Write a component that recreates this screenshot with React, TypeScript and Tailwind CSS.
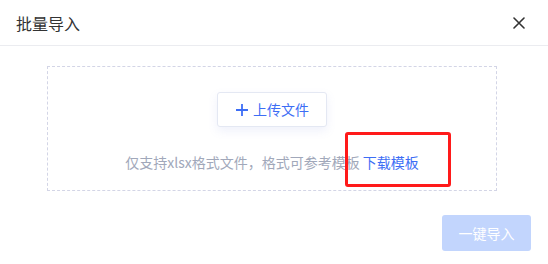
import React from 'react';

const font = { fontFamily: '"Noto Sans CJK SC", "Noto Sans", sans-serif' };

function CloseIcon() {
  return (
    <svg width="12" height="12" viewBox="0 0 12 12" fill="none">
      <path d="M1 1L11 11M11 1L1 11" stroke="#333" strokeWidth="1.6" strokeLinecap="round" />
    </svg>
  );
}

function PlusIcon() {
  return (
    <svg width="14" height="14" viewBox="0 0 14 14" fill="none">
      <path d="M7 1V13M1 7H13" stroke="#3d6ef5" strokeWidth="1.8" />
    </svg>
  );
}

export default function App() {
  return (
    <div className="relative w-[548px] h-[264px] bg-white overflow-hidden" style={font}>
      {/* header */}
      <div className="flex h-[46px] items-center justify-between border-b border-[#ebecf0] pl-4 pr-[23px]">
        <span className="text-[16px] leading-none text-[#333]">批量导入</span>
        <CloseIcon />
      </div>

      {/* upload area */}
      <div className="pt-[20px] pl-[47px]">
        <div className="flex h-[125px] w-[450px] flex-col items-center border border-dashed border-[#d3d5e6] pt-[25px]">
          <button className="flex h-[35px] w-[110px] items-center justify-center gap-[4px] rounded-[3px] border border-[#e4e8f3] bg-white text-[14px] text-[#3d6ef5] shadow-[0_4px_10px_rgba(120,140,220,0.12)]">
            <PlusIcon />
            <span>上传文件</span>
          </button>
          <p className="mt-[25px] text-[14px] leading-[20px] text-[#a1a8ba]">
            仅支持xlsx格式文件，格式可参考模板 <span className="text-[#3d6ef5]">下载模板</span>
          </p>
        </div>
      </div>

      {/* footer */}
      <div className="flex justify-end pt-[24px] pr-[17px]">
        <button className="h-[36px] w-[89px] rounded-[3px] bg-[#c2d5fd] text-[14px] text-white">一键导入</button>
      </div>

      {/* annotation */}
      <div className="absolute left-[345px] top-[132px] h-[55px] w-[106px] rounded-[3px] border-[3px] border-[#ff1a1a]" />
    </div>
  );
}
